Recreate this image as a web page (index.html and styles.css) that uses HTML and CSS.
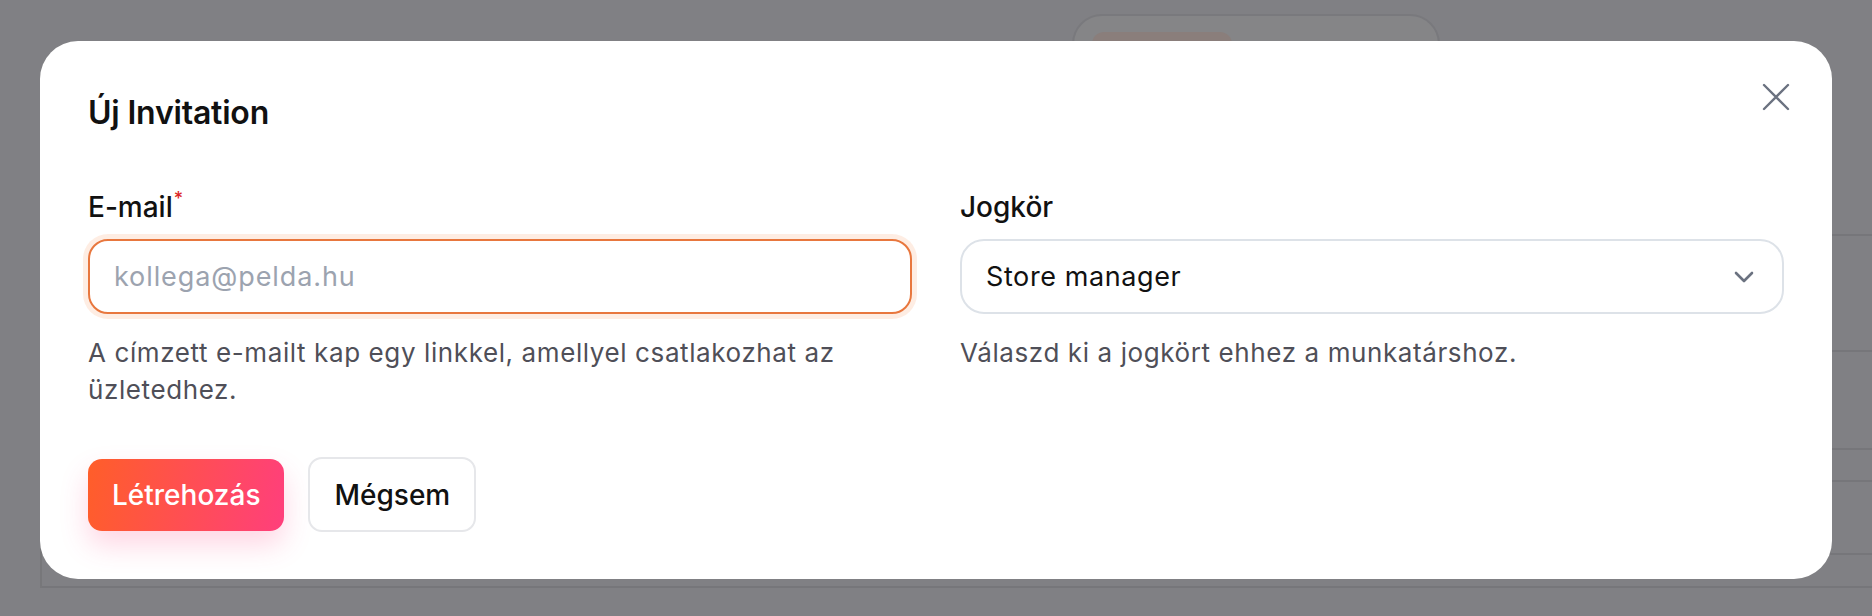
FILE: index.html
```html
<!DOCTYPE html>
<html lang="hu">
<head>
  <meta charset="UTF-8" />
  <meta name="viewport" content="width=device-width, initial-scale=1.0" />
  <title>Új Invitation</title>
  <link rel="stylesheet" href="styles.css">
</head>
<body>
  <div class="hatter">
    <div class="hatter-kartya">
      <div class="hatter-pill"></div>
    </div>
    <div class="hatter-tabla">
      <div class="sor s1"></div>
      <div class="sor s2"></div>
      <div class="sor s3"></div>
      <div class="sor s4"></div>
      <div class="sor s5"></div>
      <div class="sor s6"></div>
    </div>
  </div>

  <div class="modal">
    <button class="bezar" aria-label="Bezárás">
      <svg width="28" height="28" viewBox="0 0 28 28" fill="none" stroke="#6b7280" stroke-width="2.4" stroke-linecap="round">
        <path d="M2 2 L26 26 M26 2 L2 26" />
      </svg>
    </button>

    <h2 class="cim">Új Invitation</h2>

    <div class="mezok">
      <div class="mezo">
        <label class="cimke" for="email">E-mail<span class="kotelezo">*</span></label>
        <input class="bemenet" id="email" type="email" placeholder="kollega@pelda.hu">
        <p class="sugo">A címzett e-mailt kap egy linkkel, amellyel csatlakozhat az üzletedhez.</p>
      </div>
      <div class="mezo">
        <label class="cimke">Jogkör</label>
        <div class="valaszto">
          <span>Store manager</span>
          <svg width="20" height="12" viewBox="0 0 20 12" fill="none" stroke="#6b7280" stroke-width="2.6" stroke-linecap="round" stroke-linejoin="round">
            <path d="M2 2 L10 10 L18 2" />
          </svg>
        </div>
        <p class="sugo">Válaszd ki a jogkört ehhez a munkatárshoz.</p>
      </div>
    </div>

    <div class="gombok">
      <button class="gomb elsodleges">Létrehozás</button>
      <button class="gomb masodlagos">Mégsem</button>
    </div>
  </div>
</body>
</html>
```

FILE: styles.css
```css
body {
  font-family: Inter, "Noto Sans", sans-serif;
  background-color: #808084;
  color: #111;
  margin: 0;
  width: 1872px;
  height: 616px;
  overflow: hidden;
  position: relative;
}
.hatter {
  height: 616px;
  padding-top: 14px;
  box-sizing: border-box;
}
.hatter-kartya {
  margin-left: 1072px;
  width: 368px;
  height: 120px;
  background: #858587;
  border: 2px solid #79797d;
  border-radius: 30px;
  padding: 16px 18px;
  box-sizing: border-box;
}
.hatter-pill {
  width: 140px;
  height: 40px;
  border-radius: 12px;
  background: #8a7e7b;
}
.hatter-tabla {
  margin-left: 40px;
  margin-top: 100px;
  border-left: 2px solid #77777a;
}
.sor {
  border-bottom: 2px solid #76767a;
}
.s1 { height: 0; }
.s2 { height: 114px; }
.s3 { height: 96px; }
.s4 { height: 30px; }
.s5 { height: 71px; }
.s6 { height: 31px; }

.modal {
  position: absolute;
  left: 40px;
  top: 41px;
  width: 1792px;
  box-sizing: border-box;
  background: #fff;
  border-radius: 38px;
  padding: 52px 48px 47px;
}
.bezar {
  position: absolute;
  top: 42px;
  right: 42px;
  padding: 0;
  border: none;
  background: none;
  cursor: pointer;
  line-height: 0;
}
.cim {
  margin: 0;
  font-size: 32px;
  line-height: 40px;
  font-weight: 600;
  letter-spacing: -0.2px;
}
.mezok {
  display: grid;
  grid-template-columns: 1fr 1fr;
  gap: 48px;
  margin-top: 56px;
}
.cimke {
  display: block;
  font-size: 28px;
  line-height: 36px;
  font-weight: 500;
  margin-bottom: 14px;
}
.kotelezo {
  color: #dc2626;
  font-size: 18px;
  line-height: 1;
  position: relative;
  top: -12px;
  margin-left: 1px;
}
.bemenet {
  display: block;
  width: 100%;
  height: 75px;
  box-sizing: border-box;
  border: 2px solid #e8773e;
  border-radius: 20px;
  box-shadow: 0 0 0 5px rgba(251, 140, 80, 0.16);
  padding: 0 24px;
  font-family: inherit;
  font-size: 27px;
  letter-spacing: 0.9px;
  color: #111;
  outline: none;
}
.bemenet::placeholder {
  color: #9ca3af;
}
.valaszto {
  height: 75px;
  box-sizing: border-box;
  border: 2px solid #dde2e8;
  border-radius: 24px;
  padding: 0 28px 0 24px;
  display: flex;
  align-items: center;
  justify-content: space-between;
  font-size: 27px;
  letter-spacing: 0.6px;
  color: #111;
}
.sugo {
  margin: 20px 0 0;
  font-size: 26px;
  line-height: 37px;
  letter-spacing: 0.6px;
  color: #4f4f58;
}
.gombok {
  display: flex;
  align-items: center;
  gap: 24px;
  margin-top: 49px;
}
.gomb {
  font-family: inherit;
  font-size: 28px;
  font-weight: 500;
  border-radius: 14px;
  cursor: pointer;
}
.elsodleges {
  height: 72px;
  padding: 0 24px;
  border: none;
  color: #fff;
  background: linear-gradient(100deg, #ff5e29 0%, #ff3f7c 100%);
  box-shadow: 0 14px 28px rgba(255, 70, 130, 0.22);
}
.masodlagos {
  height: 75px;
  padding: 0 24px;
  border: 2px solid #e6e7ea;
  background: #fff;
  color: #111;
}
```
